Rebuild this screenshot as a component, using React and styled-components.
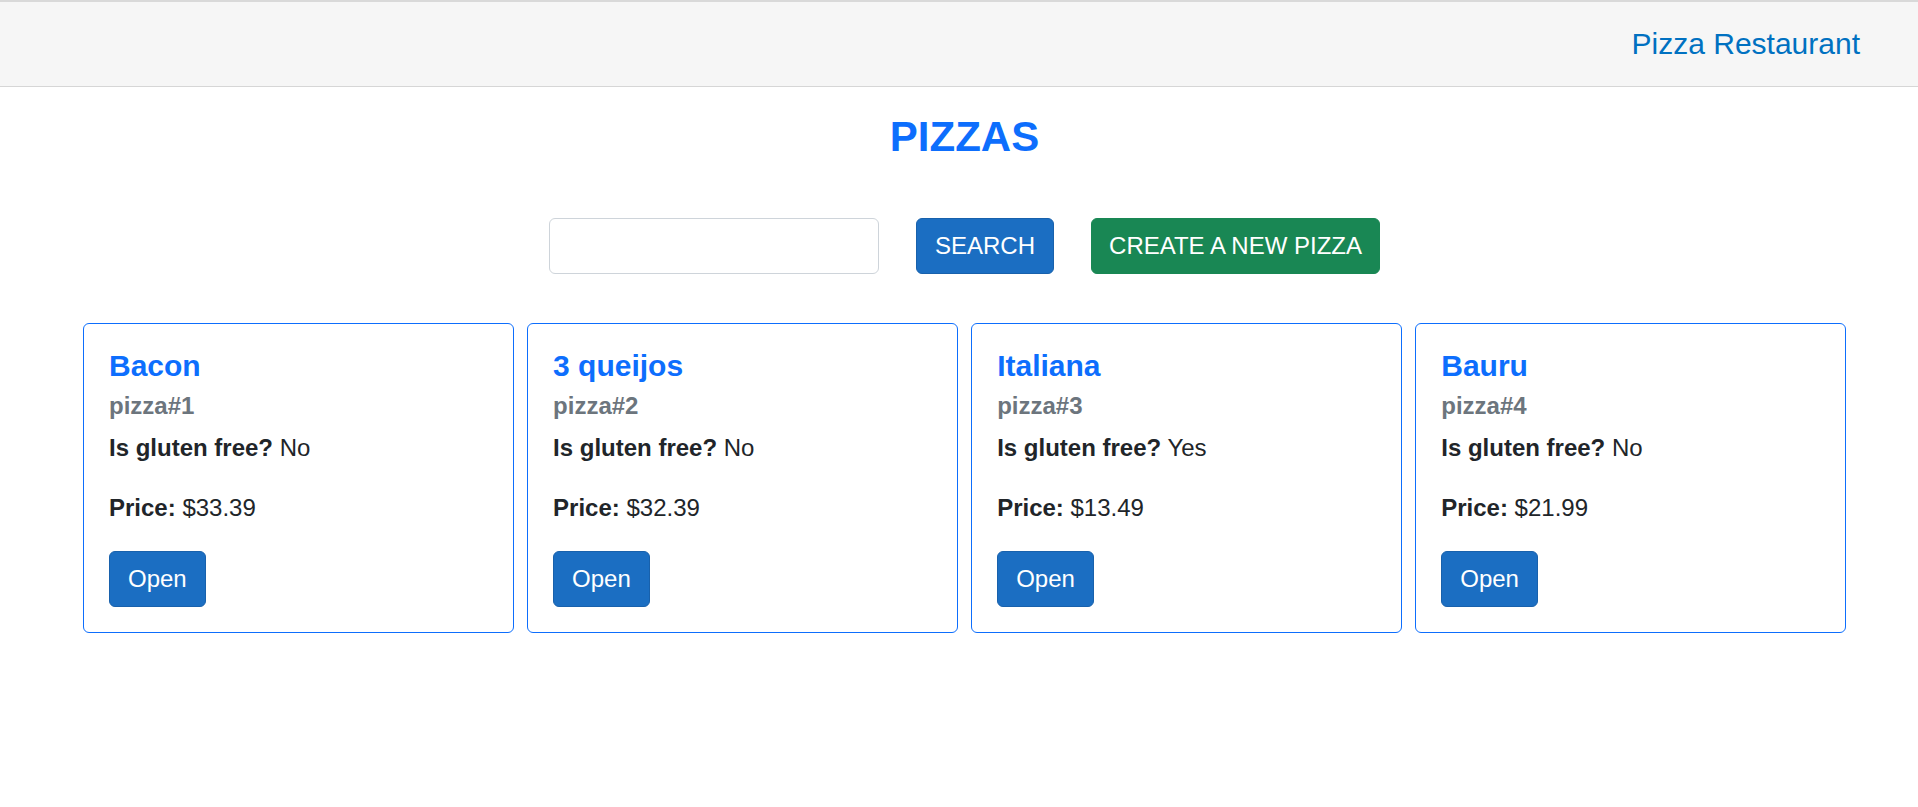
import React from "react";
import styled, { createGlobalStyle } from "styled-components";

const Global = createGlobalStyle`
  html, body { margin: 0; padding: 0; background: #fff; }
  body {
    font-family: "Liberation Sans", Arial, Helvetica, sans-serif;
    color: #212529;
    font-size: 24px;
  }
  * { box-sizing: border-box; }
`;

const Header = styled.header`
  height: 87px;
  border-top: 2px solid #d9d9d9;
  border-bottom: 1px solid #d6d6d6;
  background: #f6f6f6;
  display: flex;
  align-items: center;
  justify-content: flex-end;
  padding-right: 58px;
`;

const Brand = styled.a`
  font-size: 30px;
  line-height: 1;
  color: #0071c1;
  text-decoration: none;
`;

const Main = styled.main`
  margin: 0 59px 0 70px;
  display: flex;
  flex-direction: column;
`;

const Title = styled.h1`
  margin: 25px 0 0;
  font-size: 42px;
  line-height: 50.4px;
  font-weight: 700;
  color: #0d6efd;
  text-align: center;
`;

const Toolbar = styled.div`
  margin-top: 55.6px;
  display: flex;
  justify-content: center;
  align-items: center;
  gap: 37px;
`;

const SearchInput = styled.input`
  width: 330px;
  height: 56px;
  border: 1px solid #ced4da;
  border-radius: 6px;
  background: #fff;
  padding: 0 16px;
  font: inherit;
`;

const Button = styled.button`
  height: 56px;
  padding: 0 ${(p) => p.$px || 18}px;
  border-radius: 6px;
  border: 1px solid ${(p) => (p.$variant === "success" ? "#198754" : "#1861ac")};
  background: ${(p) => (p.$variant === "success" ? "#198754" : "#1b6ec2")};
  color: #fff;
  font-family: "Liberation Sans", Arial, sans-serif;
  font-size: 24px;
  line-height: 1;
  text-transform: ${(p) => (p.$upper ? "uppercase" : "none")};
  cursor: pointer;
  align-self: flex-start;
`;

const CardGrid = styled.div`
  margin-top: 49px;
  padding: 0 13px;
  display: grid;
  grid-template-columns: repeat(4, 1fr);
  gap: 13.3px;
`;

const Card = styled.div`
  border: 1px solid #0d6efd;
  border-radius: 6px;
  padding: 24px 25px 25px;
  display: flex;
  flex-direction: column;
`;

const CardTitle = styled.h5`
  margin: 0 0 7.5px;
  font-size: 30px;
  line-height: 36px;
  font-weight: 700;
  color: #0d6efd;
`;

const CardSubtitle = styled.h6`
  margin: 0 0 10px;
  font-size: 24px;
  line-height: 28.8px;
  font-weight: 700;
  color: #6c757d;
`;

const Line = styled.p`
  margin: 0 0 ${(p) => p.$mb || 24}px;
  font-size: 24px;
  line-height: 36px;
  color: #212529;
`;

const pizzas = [
  { id: 1, name: "Bacon", gluten: "No", price: "$33.39" },
  { id: 2, name: "3 queijos", gluten: "No", price: "$32.39" },
  { id: 3, name: "Italiana", gluten: "Yes", price: "$13.49" },
  { id: 4, name: "Bauru", gluten: "No", price: "$21.99" },
];

export default function App() {
  return (
    <>
      <Global />
      <Header>
        <Brand href="#">Pizza Restaurant</Brand>
      </Header>
      <Main>
        <Title>PIZZAS</Title>
        <Toolbar>
          <SearchInput type="text" />
          <Button $upper>Search</Button>
          <Button $upper $variant="success" $px={17}>Create a new pizza</Button>
        </Toolbar>
        <CardGrid>
          {pizzas.map((p) => (
            <Card key={p.id}>
              <CardTitle>{p.name}</CardTitle>
              <CardSubtitle>pizza#{p.id}</CardSubtitle>
              <Line>
                <b>Is gluten free?</b> {p.gluten}
              </Line>
              <Line $mb={24.6}>
                <b>Price:</b> {p.price}
              </Line>
              <Button>Open</Button>
            </Card>
          ))}
        </CardGrid>
      </Main>
    </>
  );
}
